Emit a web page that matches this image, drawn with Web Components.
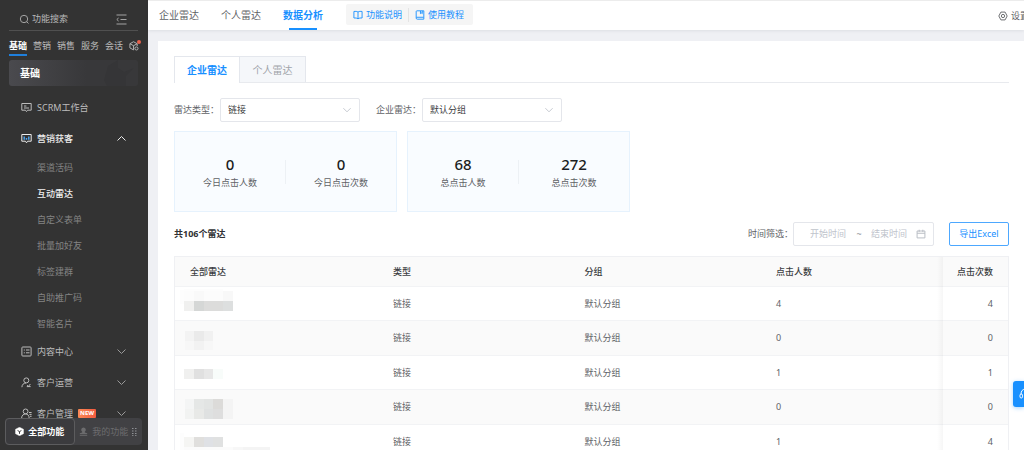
<!DOCTYPE html>
<html lang="zh-CN">
<head>
<meta charset="utf-8">
<meta name="viewport" content="width=device-width, initial-scale=1">
<title>互动雷达 - 数据分析</title>
<style>
html, body { margin: 0; height: 100%; overflow: hidden; }
body { font: 9px/14px "Noto Sans", "Noto Sans CJK SC", sans-serif; color: #606266; background: #eff0f4; }
</style>
</head>
<body>
<radar-app></radar-app>
<script>
const BASE = `
  * { box-sizing: border-box; }
  a { color: inherit; text-decoration: none; }
  button, input, select { font: inherit; color: inherit; margin: 0; padding: 0; border: 0; background: none; outline: 0; border-radius: 0; }
  button { cursor: pointer; white-space: nowrap; }
  svg { display: block; flex: none; fill: none; stroke: currentColor; }
`;
function define(name, css, html) {
  customElements.define(name, class extends HTMLElement {
    connectedCallback() {
      if (this.shadowRoot) return;
      const root = this.attachShadow({ mode: 'open' });
      const markup = typeof html === 'function' ? html(this) : html;
      root.innerHTML = `<style>${BASE}${css}</style>${markup}`;
    }
  });
}

const ICONS = {
  search: '<circle cx="5" cy="5" r="3.700"/><path d="M7.700 7.700 9.500 9.500"/>',
  fold: '<path d="M0.500 1h10M4.500 5.500h6M0.500 10h10M2.600 4 .8 5.500l1.800 1.600"/>',
  board: '<path d="M.8 1.500h9.400v6.700H6.600L5.500 9.600 4.400 8.200H.8zM3 4h2.400M3 6h5"/>',
  chart: '<path d="M.8 1.500h9.400v6.700H6.600L5.500 9.800 4.400 8.200H.8z"/><path d="M3.200 6.700V3.500M5.500 6.700V5M7.800 6.700V3.500" stroke="#4fa9f8" stroke-width="1.400"/>',
  list: '<rect x=".9" y="1" width="9.200" height="9" rx=".8"/><path d="M2.800 4h1M5 4h3.500M2.800 6.800h1M5 6.800h3.500"/>',
  user: '<circle cx="5.300" cy="3.400" r="2.500"/><path d="M.9 10.200C1 7.600 2.600 6 5 6M6.200 8.200l1.200 1.200 2-2.400M9.600 9.600H5.800"/>',
  users: '<circle cx="4.600" cy="3.400" r="2.400"/><path d="M.6 10.200C.7 7.400 2.400 6 4.600 6s3.400 1.400 3.600 4.200M8 4.500h2.600M8.400 6.400h2.200M9 8.300h1.600"/>',
  down: '<path d="m1.500 3.500 4 4 4-4"/>',
  up: '<path d="m1.500 7.500 4-4 4 4"/>',
  cube: '<path d="M5 .8 9 3v2.500M5 .8 1 3v4.600l4 2.200M1 3l4 2.200L9 3M5 5.200v4.600"/><circle cx="8.200" cy="8.200" r="1.700"/>',
  book: '<path d="M5.500 2.200C4.500 1.400 2.600 1.400 1 1.600v7.200c1.600-.2 3.500 0 4.500.8 1-.8 2.900-1 4.500-.8V1.600C8.400 1.400 6.500 1.400 5.500 2.200zm0 0v7.200"/>',
  note: '<path d="M2 .9h7.700v9.200H2.600c-.9 0-1.300-.5-1.300-1.200V1.700C1.300 1.200 1.600.9 2 .9zM1.500 8h8M6 1v3l1-.8 1 .8V1"/>',
  gear: '<path d="M3.200 1.200h4.600l2.300 4.300-2.300 4.300H3.200L.9 5.500z"/><circle cx="5.500" cy="5.500" r="1.800"/>',
  calendar: '<path d="M1.200 2.200h8.600v7.600H1.200zM1.200 4.700h8.600M3.500.8v2.400M7.500.8v2.400"/>'
};
const icon = (name, size = 11, extra = '') => `<svg width="${size}" height="${size}" viewBox="0 0 11 11" aria-hidden="true" ${extra}>${ICONS[name]}</svg>`;

define('menu-item', `
  :host { display: block; }
  a { display: flex; align-items: center; height: 31px; padding: 0 21px; gap: 5px; color: #bcbcbc; }
  span { white-space: nowrap; }
  .arrow { margin-left: auto; color: #9a9a9a; }
  :host([open]) a, :host([open]) .arrow { color: #ececec; font-weight: 500; }
  .new { background: linear-gradient(90deg, #fb8a55, #f2593f); color: #fff; font-size: 6px; line-height: 9px; font-weight: 700; padding: 0 2px; border-radius: 1px; }
`, el => `<a href="#">${icon(el.getAttribute('icon'))}<span><slot></slot></span>
  ${el.hasAttribute('new') ? '<span class="new">NEW</span>' : ''}
  ${el.hasAttribute('leaf') ? '' : icon(el.hasAttribute('open') ? 'up' : 'down', 11, 'class="arrow"')}</a><slot name="sub"></slot>`);

define('sub-item', `
  :host { display: block; }
  a { display: flex; align-items: center; height: 26px; padding: 1px 0 0 37px; color: #848484; }
  :host([active]) a { color: #f0f0f0; font-weight: 500; }
`, '<a href="#"><slot></slot></a>');

define('side-bar', `
  :host { display: block; position: relative; flex: none; width: 148px; height: 100%; overflow: hidden; background: #333; color: #bcbcbc; }
  .search { display: flex; align-items: center; height: 31px; margin: 0 10px 0 9px; padding: 8px 11px 0 10px; gap: 2px; border-bottom: 1px solid #505050; }
  .search input { flex: 1; min-width: 0; height: 14px; color: #c4c4c4; }
  .search input::placeholder { color: #b8b8b8; opacity: 1; }
  .search svg { color: #a4a4a4; }
  .tabs { display: flex; justify-content: space-between; margin: 0 9px; height: 25px; align-items: stretch; }
  .tabs a { display: flex; align-items: center; padding-top: 7px; border-bottom: 2px solid transparent; white-space: nowrap; }
  .tabs a.on { color: #fff; font-weight: 700; border-color: #1f7fdc; }
  .tabs a:last-child { position: relative; }
  .dot { position: absolute; right: -2px; top: 9px; width: 4px; height: 4px; border-radius: 50%; background: #e8614c; }
  .banner { display: flex; align-items: center; height: 26px; margin: 4px 10px 6px 9px; padding-left: 11px; border-radius: 3px; font-size: 10px; font-weight: 700; color: #fff; overflow: hidden; background: linear-gradient(90deg, #4a4a4e, #38383a 60%, #38383a); }
  .banner svg { margin-left: auto; stroke: none; fill: #353537; }
  .foot { position: absolute; left: 5px; right: 6px; bottom: 5px; height: 27px; display: flex; border-radius: 4px; background: #414144; }
  .foot button { display: flex; align-items: center; justify-content: center; gap: 4px; flex: 1; color: #6c6c6e; }
  .foot .on { color: #fff; font-weight: 700; border: 1px solid #5c5c5e; border-radius: 4px; background: #3b3b3e; }
`, `
  <div class="search">${icon('search')}<input type="search" aria-label="功能搜索" placeholder="功能搜索">${icon('fold')}</div>
  <nav class="tabs"><a class="on" href="#">基础</a><a href="#">营销</a><a href="#">销售</a><a href="#">服务</a><a href="#">会话</a><a href="#" aria-label="更多应用">${icon('cube', 10)}<i class="dot"></i></a></nav>
  <div class="banner">基础<svg width="34" height="26" viewBox="0 0 34 26"><path d="M4 6 14 0v26H3L0 20zM14 8l6 4 10-4-8 8v10h-8z"/></svg></div>
  <nav>
    <menu-item icon="board" leaf>SCRM工作台</menu-item>
    <menu-item icon="chart" open>营销获客
      <div slot="sub">
        <sub-item>渠道活码</sub-item><sub-item active>互动雷达</sub-item><sub-item>自定义表单</sub-item>
        <sub-item>批量加好友</sub-item><sub-item>标签建群</sub-item><sub-item>自助推广码</sub-item><sub-item>智能名片</sub-item>
      </div>
    </menu-item>
    <menu-item icon="list">内容中心</menu-item>
    <menu-item icon="user">客户运营</menu-item>
    <menu-item icon="users" new>客户管理</menu-item>
  </nav>
  <div class="foot">
    <button class="on"><svg width="9" height="9" viewBox="0 0 9 9"><path d="M4.500.2 8.500 2.300v4.400L4.500 8.800.5 6.700V2.300z" fill="#fff" stroke="#fff" stroke-width=".4"/><path d="M2.600 3.500 4.500 4.600l1.900-1.100M4.500 4.600v2.200" stroke="#3b3b3e"/></svg>全部功能</button>
    <button><svg width="9" height="9" viewBox="0 0 9 9"><path d="M4.500.5a2.300 2.300 0 0 1 1.300 4.200v.8l2.400.8v1H.8v-1l2.400-.8v-.8A2.300 2.300 0 0 1 4.500.5zM.8 7.900h7.400v.8H.8z" fill="currentColor" stroke="none"/></svg>我的功能<svg width="5" height="8" viewBox="0 0 5 8"><path d="M0 .5h1.500M3 .5h1.500M0 3h1.500M3 3h1.500M0 5.500h1.500M3 5.500h1.500M0 7.700h1.500M3 7.700h1.500" stroke="#909296"/></svg></button>
  </div>
`);

define('top-bar', `
  :host { display: flex; align-items: stretch; height: 30px; padding-left: 11px; overflow: hidden; background: #fff; border-top: 1px solid #ececec; box-shadow: 0 1px 3px #00152914; font-size: 10px; color: #606266; position: relative; }
  nav { display: flex; gap: 22px; }
  nav a { display: flex; align-items: center; position: relative; padding-bottom: 2px; white-space: nowrap; }
  nav .on { color: #1890ff; font-weight: 700; }
  nav .on::after { content: ""; position: absolute; left: 6px; right: 6px; bottom: 0; height: 2px; background: #1890ff; }
  .help { display: flex; align-items: center; align-self: flex-start; height: 21px; margin: 3px 0 0 23px; padding: 0 9px 0 7px; background: #f5f5f5; border-radius: 2px; font-size: 9px; color: #1890ff; }
  .help a { display: flex; align-items: center; gap: 3px; white-space: nowrap; }
  .help a + a { margin-left: 6px; padding-left: 6px; border-left: 1px solid #e4e4e4; }
  .set { display: flex; align-items: center; gap: 3px; width: 26px; margin-left: auto; font-size: 9px; white-space: nowrap; }
`, `
  <nav><a href="#">企业雷达</a><a href="#">个人雷达</a><a class="on" href="#">数据分析</a></nav>
  <div class="help"><a href="#">${icon('book', 10)}功能说明</a><a href="#">${icon('note', 10)}使用教程</a></div>
  <a class="set" href="#">${icon('gear', 10)}设置</a>
`);

define('radar-tabs', `
  :host { display: flex; border-bottom: 1px solid #e8eaee; font-size: 10px; }
  button { width: 66px; height: 26px; border: 1px solid #e4e7ed; border-bottom: 0; background: #f5f7fa; color: #a0a3a9; }
  button + button { border-left: 0; }
  .on { position: relative; margin-bottom: -1px; height: 27px; background: #fff; color: #1890ff; font-weight: 700; }
`, '<button class="on">企业雷达</button><button>个人雷达</button>');

define('filter-select', `
  :host { display: flex; align-items: center; gap: 5px; white-space: nowrap; }
  label { width: 41px; }
  .box { position: relative; width: 140px; }
  select { appearance: none; width: 100%; height: 24px; padding: 0 24px 0 7px; border: 1px solid #e4e6eb; border-radius: 2px; background: #fff; color: #3c3e42; display: block; }
  svg { position: absolute; right: 8px; top: 7px; color: #c0c4cc; pointer-events: none; }
`, el => `<label for="s">${el.getAttribute('label')}：</label><div class="box"><select id="s"><option>${el.getAttribute('value')}</option></select>${icon('down', 10)}</div>`);

define('stat-card', `
  :host { display: flex; align-items: center; width: 223px; height: 81px; border: 1px solid #e6f2fd; background: #f9fcff; }
  ::slotted(*) { flex: 1; }
  ::slotted(:first-child) { border-right: 1px solid #edf1f5; }
`, '<slot></slot>');
define('stat-item', `
  :host { display: flex; flex-direction: column; align-items: center; justify-content: center; gap: 2px; height: 24px; }
  strong { font-size: 15px; line-height: 20px; font-weight: 500; color: #1c1e22; }
`, el => `<strong>${el.getAttribute('value')}</strong><span><slot></slot></span>`);

define('list-toolbar', `
  :host { display: flex; align-items: center; }
  h2 { margin: 0 auto 0 0; font: inherit; font-weight: 700; color: #303133; }
  .range { display: flex; align-items: center; width: 141px; height: 24px; margin: 0 15px 0 0; padding: 0 7px 0 16px; border: 1px solid #e4e6eb; border-radius: 2px; color: #b4b8c0; }
  input { width: 37px; height: 14px; flex: none; }
  input::placeholder { color: #c0c4cc; opacity: 1; }
  i { flex: none; width: 24px; text-align: center; font-style: normal; color: #909399; }
  .range svg { margin-left: auto; }
  .export { width: 60px; height: 24px; border: 1px solid #4da8ff; border-radius: 2px; color: #1890ff; }
  label { width: 45px; white-space: nowrap; }
`, `<h2>共106个雷达</h2><label for="from">时间筛选：</label>
  <div class="range"><input id="from" placeholder="开始时间"><i>~</i><input aria-label="结束时间" placeholder="结束时间">${icon('calendar', 10)}</div>
  <button class="export">导出Excel</button>`);

/* Masked names: each row lists blocks as [x, y, width, height, colour]. */
const MASKS = [
  [[-4,3,4,14,'#fdfdfd'],[0,2,39,2,'#fdfdfd'],[0,4,10,10,'#fcfcfc'],[10,4,10,10,'#f9f9f9'],[20,4,19,10,'#fcfcfc'],[39,4,10,10,'#f8f8f8'],[0,14,10,10,'#f0f0ef'],[10,14,10,10,'#d5d7d6'],[20,14,19,10,'#dcdcdb'],[39,14,10,10,'#dddfdf']],
  [[1,9,9,10,'#f3f3f3'],[10,9,10,10,'#eaeaea'],[20,9,9,10,'#f1f1f1'],[1,19,9,9,'#f7f7f7'],[10,19,10,9,'#f2f2f2'],[20,19,9,9,'#f7f7f7']],
  [[0,13,10,10,'#f0f0ef'],[10,13,10,10,'#e0e0e0'],[20,13,9,10,'#e7e7e7'],[29,13,10,10,'#f8fcfa']],
  [[1,8,9,10,'#f4f5f5'],[10,8,10,10,'#e5e7e6'],[20,8,9,10,'#e2e4e3'],[29,8,10,10,'#dcdbd9'],[39,8,10,10,'#f4f4f4'],[1,18,9,10,'#f2f3f2'],[10,18,10,10,'#e8e9e7'],[20,18,9,10,'#dfe1e1'],[29,18,10,10,'#dedede'],[39,18,10,10,'#f4f4f4']],
  [[-4,8,4,18,'#fdfdfd'],[0,12,10,10,'#f5f5f3'],[10,12,10,10,'#e0dfdd'],[20,12,9,10,'#dfe1e5'],[29,12,10,10,'#e0e1e1'],[0,22,49,10,'#fbfbfb'],[49,22,10,10,'#f7f7f7'],[59,22,27,10,'#f4f4f4']]
];
const ROWS = [4, 0, 1, 0, 1].map((people, i) => ({ people, clicks: [4, 0, 1, 0, 4][i], mask: MASKS[i] }));
define('radar-table', `
  :host { display: block; margin-top: 10px; }
  table { width: 100%; table-layout: fixed; border-collapse: separate; border-spacing: 0; border: 1px solid #eff0f3; border-bottom: 0; }
  .c1 { width: 24%; } .c2 { width: 23%; } .c3 { width: 23%; } .c5 { width: 65px; }
  th, td { height: 34px; padding: 0 15px; text-align: left; font-weight: 400; border-bottom: 1px solid #f2f3f5; white-space: nowrap; }
  th { height: 30px; background: #fafafa; color: #3c3e42; font-weight: 500; }
  tr:nth-child(even) td { height: 35px; background: #fafafa; }
  td:first-child { padding: 0 9px; }
  th:not(:first-child), td:not(:first-child) { padding-left: 18px; }
  th:last-child, td:last-child { text-align: right; padding-left: 0; position: relative; }
  th:last-child::before, td:last-child::before { content: ""; position: absolute; left: -6px; top: 0; bottom: -1px; width: 6px; background: linear-gradient(90deg, transparent, #00000009); }
  td svg { stroke: none; overflow: visible; }
`, `<table><colgroup><col class="c1"><col class="c2"><col class="c3"><col><col class="c5"></colgroup>
  <thead><tr><th>全部雷达</th><th>类型</th><th>分组</th><th>点击人数</th><th>点击次数</th></tr></thead>
  <tbody>${ROWS.map(r => `<tr><td><svg width="86" height="33" viewBox="0 0 86 33" aria-hidden="true">${r.mask.map(m => `<rect x="${m[0]}" y="${m[1]}" width="${m[2]}" height="${m[3]}" fill="${m[4]}"/>`).join('')}</svg></td><td>链接</td><td>默认分组</td><td>${r.people}</td><td>${r.clicks}</td></tr>`).join('')}</tbody></table>`);

define('service-button', `
  :host { position: fixed; right: 0; bottom: 43px; }
  button { display: flex; align-items: center; width: 11px; height: 26px; padding-left: 6px; overflow: hidden; border-radius: 3px 0 0 3px; background: #1890ff; color: #fff; box-shadow: 0 1px 4px #1890ff66; }
`, `<button aria-label="在线客服"><svg width="12" height="12" viewBox="0 0 12 12"><path d="M2 6.500C2 3 3.500 1.200 6 1.200S10 3 10 6.500"/><rect x="1" y="6" width="2.500" height="4" rx="1.200"/><rect x="8.500" y="6" width="2.500" height="4" rx="1.200"/></svg></button>`);

define('radar-app', `
  :host { display: flex; height: 100vh; overflow: hidden; }
  main { flex: 1; min-width: 0; display: flex; flex-direction: column; }
  .card { flex: 1; margin: 11px 0 0 10px; padding: 15px 15px 0 16px; background: #fff; min-height: 0; overflow: hidden; }
  .filters { display: flex; gap: 16px; margin-top: 15px; }
  .stats { display: flex; gap: 10px; margin: 9px 0 10px; }
`, `
  <side-bar></side-bar>
  <main>
    <top-bar></top-bar>
    <section class="card">
      <radar-tabs></radar-tabs>
      <div class="filters"><filter-select label="雷达类型" value="链接"></filter-select><filter-select label="企业雷达" value="默认分组"></filter-select></div>
      <div class="stats">
        <stat-card><stat-item value="0">今日点击人数</stat-item><stat-item value="0">今日点击次数</stat-item></stat-card>
        <stat-card><stat-item value="68">总点击人数</stat-item><stat-item value="272">总点击次数</stat-item></stat-card>
      </div>
      <list-toolbar></list-toolbar>
      <radar-table></radar-table>
    </section>
  </main>
  <service-button></service-button>
`);
</script>
</body>
</html>
